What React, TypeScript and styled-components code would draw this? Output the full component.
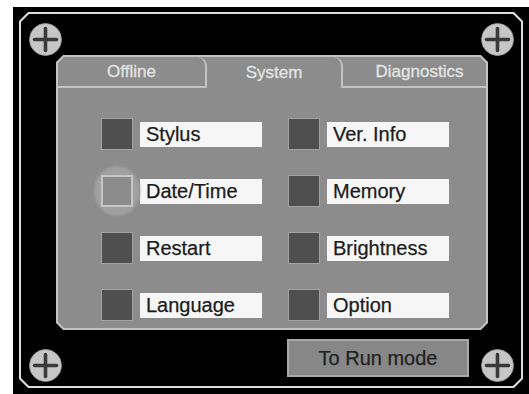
import React from "react";
import styled, { createGlobalStyle, css } from "styled-components";

const Global = createGlobalStyle`
  html, body { margin: 0; padding: 0; background: #fff; }
  body { font-family: "Liberation Sans", Arial, sans-serif; }
`;

const chamfer = (c: number) =>
  `polygon(${c}px 0, calc(100% - ${c}px) 0, 100% ${c}px, 100% calc(100% - ${c}px), calc(100% - ${c}px) 100%, ${c}px 100%, 0 calc(100% - ${c}px), 0 ${c}px)`;

const Page = styled.div`
  padding: 7px 0 0 13px;
`;

const Bezel = styled.div`
  width: 516px;
  height: 387px;
  box-sizing: border-box;
  background: #000;
  padding: 5px 6px 6px 6px;
`;

const FrameLine = styled.div`
  height: 100%;
  box-sizing: border-box;
  background: #dcdcdc;
  padding: 2px;
  clip-path: ${chamfer(9)};
`;

const Screen = styled.div`
  position: relative;
  height: 100%;
  box-sizing: border-box;
  background: #000;
  clip-path: ${chamfer(8)};
  padding: 41px 33px 9px 35px;
  display: flex;
  flex-direction: column;
  gap: 9px;
`;

const PanelEdge = styled.div`
  height: 275px;
  box-sizing: border-box;
  background: #c2c2c2;
  padding: 2px;
  clip-path: ${chamfer(7)};
`;

const PanelBody = styled.div`
  height: 100%;
  background: #8c8c8c;
  clip-path: ${chamfer(6)};
  display: flex;
  flex-direction: column;
`;

const TabRow = styled.div`
  display: flex;
  height: 31px;
`;

const Tab = styled.div<{ $w: number; $right?: boolean; $bottom?: boolean; $pl?: number }>`
  width: ${(p) => p.$w}px;
  box-sizing: border-box;
  display: flex;
  align-items: center;
  justify-content: center;
  padding-left: ${(p) => p.$pl ?? 0}px;
  color: #e4e4e4;
  font-size: 17px;
  -webkit-text-stroke: 0.3px #e4e4e4;
  ${(p) =>
    p.$right &&
    css`
      border-right: 2px solid #c2c2c2;
      border-top-right-radius: 9px;
    `}
  ${(p) =>
    p.$bottom &&
    css`
      border-bottom: 2px solid #c2c2c2;
    `}
`;

const Grid = styled.div`
  display: grid;
  grid-template-columns: 161px 161px;
  column-gap: 26px;
  row-gap: 25px;
  padding: 30px 0 0 43px;
`;

const Item = styled.div`
  display: flex;
  align-items: center;
  gap: 7px;
`;

const Slot = styled.div<{ $touched?: boolean }>`
  position: relative;
  width: 32px;
  height: 32px;
  ${(p) =>
    p.$touched &&
    css`
      &::before {
        content: "";
        position: absolute;
        left: 50%;
        top: 50%;
        width: 46px;
        height: 50px;
        transform: translate(-50%, -50%);
        border-radius: 50%;
        background: #a0a0a0;
        filter: blur(1px);
      }
    `}
`;

const Square = styled.div<{ $touched?: boolean }>`
  position: relative;
  width: 32px;
  height: 32px;
  box-sizing: border-box;
  border: ${(p) => (p.$touched ? "2px solid #c6c6c6" : "1px solid #a2a2a2")};
  background: ${(p) => (p.$touched ? "#8c8c8c" : "#4f4f4f")};
`;

const Label = styled.div`
  width: 122px;
  height: 25px;
  box-sizing: border-box;
  background: #f6f6f6;
  color: #1c1c1c;
  font-size: 20px;
  line-height: 25px;
  padding-left: 6px;
  white-space: nowrap;
  -webkit-text-stroke: 0.25px #1c1c1c;
`;

const RunButton = styled.div`
  align-self: flex-end;
  margin-right: 19px;
  width: 182px;
  height: 38px;
  box-sizing: border-box;
  background: #878787;
  border: 2px solid #a9a9a9;
  color: #222;
  font-size: 20px;
  -webkit-text-stroke: 0.25px #222;
  display: flex;
  align-items: center;
  justify-content: center;
`;

const ScrewHole = styled.div<{ $pos: "tl" | "tr" | "bl" | "br" }>`
  position: absolute;
  width: 33px;
  height: 33px;
  ${(p) => (p.$pos[0] === "t" ? "top: 9px;" : "bottom: 4px;")}
  ${(p) => (p.$pos[1] === "l" ? "left: 8px;" : "right: 7px;")}
`;

const Screw = ({ pos }: { pos: "tl" | "tr" | "bl" | "br" }) => (
  <ScrewHole $pos={pos}>
    <svg width="33" height="33" viewBox="0 0 33 33">
      <circle cx="16.5" cy="16.5" r="16" fill="#c6c6c6" stroke="#9a9a9a" strokeWidth="0.8" />
      <line x1="5.5" y1="16.5" x2="27.5" y2="16.5" stroke="#3a3a3a" strokeWidth="3.6" strokeLinecap="round" />
      <line x1="16.5" y1="5.5" x2="16.5" y2="27.5" stroke="#3a3a3a" strokeWidth="3.6" strokeLinecap="round" />
    </svg>
  </ScrewHole>
);

const items: { label: string; touched?: boolean }[] = [
  { label: "Stylus" },
  { label: "Ver. Info" },
  { label: "Date/Time", touched: true },
  { label: "Memory" },
  { label: "Restart" },
  { label: "Brightness" },
  { label: "Language" },
  { label: "Option" },
];

export default function App() {
  return (
    <>
      <Global />
      <Page>
        <Bezel>
          <FrameLine>
            <Screen>
              <PanelEdge>
                <PanelBody>
                  <TabRow>
                    <Tab $w={149} $right $bottom>Offline</Tab>
                    <Tab $w={136} $right>System</Tab>
                    <Tab $w={143} $bottom $pl={10}>Diagnostics</Tab>
                  </TabRow>
                  <Grid>
                    {items.map((it) => (
                      <Item key={it.label}>
                        <Slot $touched={it.touched}>
                          <Square $touched={it.touched} />
                        </Slot>
                        <Label>{it.label}</Label>
                      </Item>
                    ))}
                  </Grid>
                </PanelBody>
              </PanelEdge>
              <RunButton>To Run mode</RunButton>
              <Screw pos="tl" />
              <Screw pos="tr" />
              <Screw pos="bl" />
              <Screw pos="br" />
            </Screen>
          </FrameLine>
        </Bezel>
      </Page>
    </>
  );
}
